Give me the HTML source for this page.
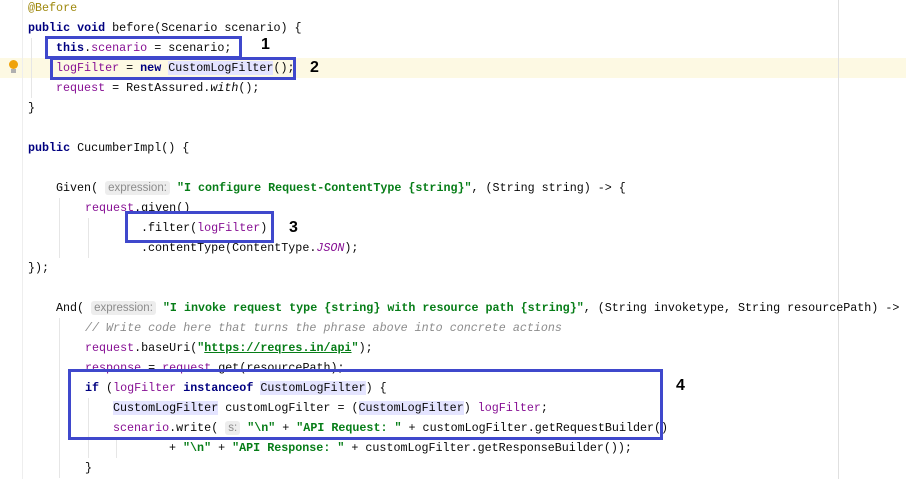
<!DOCTYPE html>
<html><head><meta charset="utf-8"><style>
body{margin:0;width:906px;height:479px;background:#fff;position:relative;overflow:hidden;font-family:"Liberation Mono",monospace;font-size:11.7px;color:#080808}
.l{position:absolute;left:0;height:20px;line-height:20px;white-space:pre}
.k{font-weight:bold;color:#000080}
.f{color:#871094}
.s{color:#067d17;font-weight:bold}
.a{color:#9e880d}
.c{color:#8c8c8c;font-style:italic}
.i{font-style:italic}
.h{font-family:"Liberation Sans",sans-serif;font-size:11.5px;color:#8c8c8c;background:#ededed;border-radius:3px;padding:1px 3px}
.hl{background:#e4e4ff}
.box{position:absolute;border:3px solid #3f48cc;box-sizing:border-box}
.n{position:absolute;font-family:"Liberation Sans",sans-serif;font-weight:bold;font-size:16px;color:#000}
.g{position:absolute;width:1px;background:#e6e6e6}
</style></head><body>
<div style="position:absolute;left:0;top:58px;width:906px;height:20px;background:#fdf9e3"></div>
<div class="g" style="left:838px;top:0;height:479px;background:#e0e0e0"></div>
<div class="g" style="left:22px;top:0;height:479px;background:#eeeeee"></div>
<div class="g" style="left:31px;top:38px;height:60px"></div>
<div class="g" style="left:59px;top:198px;height:60px"></div>
<div class="g" style="left:88px;top:218px;height:40px"></div>
<div class="g" style="left:59px;top:318px;height:160px"></div>
<div class="g" style="left:88px;top:398px;height:60px"></div>
<div class="g" style="left:116px;top:438px;height:20px"></div>
<div style="position:absolute;left:9px;top:60px;width:9px;height:9px;border-radius:50%;background:#f0a30a"></div>
<div style="position:absolute;left:11px;top:69px;width:5px;height:4px;background:#b0b0b0"></div>

<div class="l" style="top:-2px;left:28px"><span class="a">@Before</span></div>
<div class="l" style="top:18px;left:28px"><span class="k">public void</span> before(Scenario scenario) {</div>
<div class="l" style="top:38px;left:56px"><span class="k">this</span>.<span class="f">scenario</span> = scenario;</div>
<div class="l" style="top:58px;left:56px"><span class="f">logFilter</span> = <span class="k">new</span> <span class="hl">CustomLogFilter</span>();</div>
<div class="l" style="top:78px;left:56px"><span class="f">request</span> = RestAssured.<span class="i">with</span>();</div>
<div class="l" style="top:98px;left:28px">}</div>
<div class="l" style="top:138px;left:28px"><span class="k">public</span> CucumberImpl() {</div>
<div class="l" style="top:178px;left:56px">Given( <span class="h">expression:</span> <span class="s">"I configure Request-ContentType {string}"</span>, (String string) -&gt; {</div>
<div class="l" style="top:198px;left:85px"><span class="f">request</span>.given()</div>
<div class="l" style="top:218px;left:141px">.filter(<span class="f">logFilter</span>)</div>
<div class="l" style="top:238px;left:141px">.contentType(ContentType.<span class="f i">JSON</span>);</div>
<div class="l" style="top:258px;left:28px">});</div>
<div class="l" style="top:298px;left:56px">And( <span class="h">expression:</span> <span class="s">"I invoke request type {string} with resource path {string}"</span>, (String invoketype, String resourcePath) -&gt; {</div>
<div class="l" style="top:318px;left:85px"><span class="c">// Write code here that turns the phrase above into concrete actions</span></div>
<div class="l" style="top:338px;left:85px"><span class="f">request</span>.baseUri(<span class="s">"<u>https://reqres.in/api</u>"</span>);</div>
<div class="l" style="top:358px;left:85px"><span class="f">response</span> = <span class="f">request</span>.get(resourcePath);</div>
<div class="l" style="top:378px;left:85px"><span class="k">if</span> (<span class="f">logFilter</span> <span class="k">instanceof</span> <span class="hl">CustomLogFilter</span>) {</div>
<div class="l" style="top:398px;left:113px"><span class="hl">CustomLogFilter</span> customLogFilter = (<span class="hl">CustomLogFilter</span>) <span class="f">logFilter</span>;</div>
<div class="l" style="top:418px;left:113px"><span class="f">scenario</span>.write( <span class="h">s:</span> <span class="s">"\n"</span> + <span class="s">"API Request: "</span> + customLogFilter.getRequestBuilder()</div>
<div class="l" style="top:438px;left:169px">+ <span class="s">"\n"</span> + <span class="s">"API Response: "</span> + customLogFilter.getResponseBuilder());</div>
<div class="l" style="top:458px;left:85px">}</div>

<div class="box" style="left:45px;top:36px;width:197px;height:23px"></div>
<div class="box" style="left:50px;top:57px;width:246px;height:23px"></div>
<div class="box" style="left:125px;top:211px;width:149px;height:32px"></div>
<div class="box" style="left:68px;top:369px;width:595px;height:71px"></div>
<div class="n" style="left:261px;top:36px">1</div>
<div class="n" style="left:310px;top:59px">2</div>
<div class="n" style="left:289px;top:219px">3</div>
<div class="n" style="left:676px;top:377px">4</div>
</body></html>
